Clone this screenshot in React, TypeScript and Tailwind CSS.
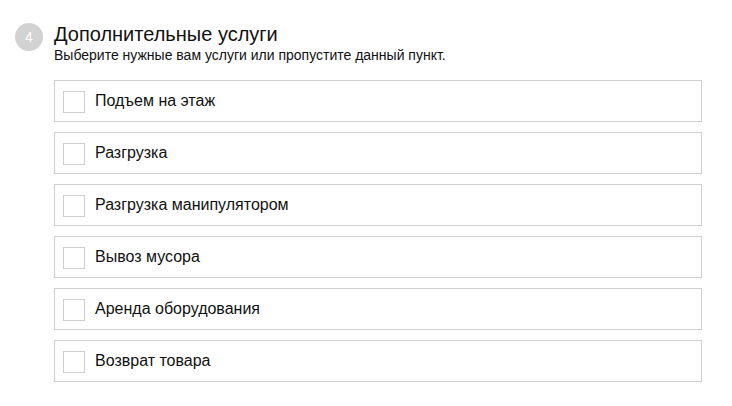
import React from 'react';

const services = [
    'Подъем на этаж',
    'Разгрузка',
    'Разгрузка манипулятором',
    'Вывоз мусора',
    'Аренда оборудования',
    'Возврат товара',
];

export default function App() {
    return (
        <div className="w-[732px] h-[406px] bg-white font-['Liberation_Sans',Arial,sans-serif] text-[#111]">
            <div className="flex items-start pl-[15px] pt-[23px] gap-[11px]">
                <div className="w-[28px] h-[28px] rounded-full bg-[#d2d2d2] text-white text-[14px] flex items-center justify-center shrink-0">
                    4
                </div>
                <div className="flex flex-col w-[648px]">
                    <h2 className="text-[20px] leading-[24px] -mt-[1px]">Дополнительные услуги</h2>
                    <p className="text-[14px] leading-[16px] mt-[1px]">Выберите нужные вам услуги или пропустите данный пункт.</p>
                    <div className="flex flex-col gap-[10px] mt-[17px]">
                        {services.map((s) => (
                            <label key={s} className="h-[42px] border border-[#cfcfcf] flex items-center pl-[8px] gap-[10px]">
                                <span className="w-[22px] h-[22px] border border-[#cfcfcf] bg-white mt-[2px] shrink-0" />
                                <span className="text-[16px] leading-[20px]">{s}</span>
                            </label>
                        ))}
                    </div>
                </div>
            </div>
        </div>
    );
}
